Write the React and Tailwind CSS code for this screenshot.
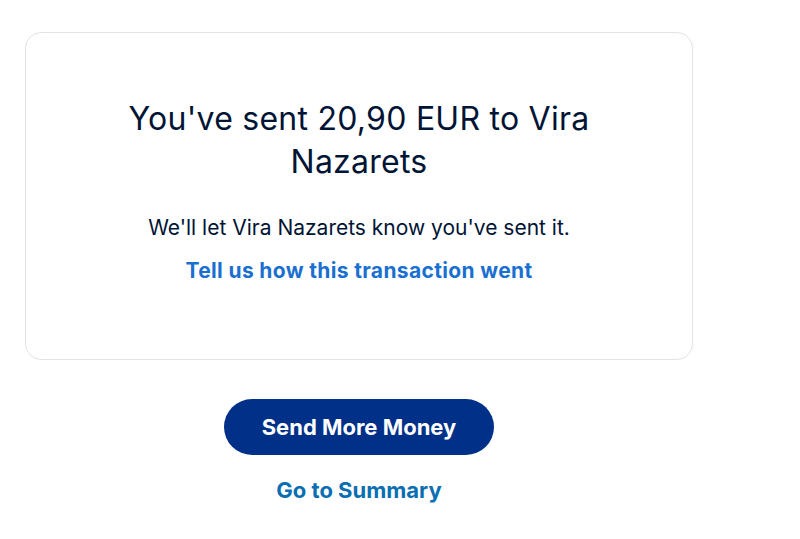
export default function App() {
  return (
    <div className="min-h-[539px] bg-white" style={{ fontFamily: 'Inter, "Liberation Sans", sans-serif' }}>
      <div className="ml-[25px] w-[668px] pt-[32px] flex flex-col items-center">
        <div className="w-full rounded-[16px] border border-[#e3e3e3] pt-[64px] pb-[75px] flex flex-col items-center">
          <h1 className="w-[490px] text-center text-[32px] leading-[43px] tracking-[0.25px] text-[#001435] font-normal">
            You've sent 20,90 EUR to Vira Nazarets
          </h1>
          <p className="mt-[32px] text-[21px] leading-[26px] text-[#001435]">
            We'll let Vira Nazarets know you've sent it.
          </p>
          <a className="mt-[17px] text-[21px] leading-[26px] font-bold tracking-[0.35px] text-[#1a6fd1] cursor-pointer">
            Tell us how this transaction went
          </a>
        </div>
        <button className="mt-[39px] w-[270px] h-[56px] rounded-full bg-[#003087] text-white text-[22px] font-bold">
          Send More Money
        </button>
        <a className="mt-[21px] text-[22px] leading-[28px] font-bold text-[#0a6eb3] cursor-pointer">
          Go to Summary
        </a>
      </div>
    </div>
  );
}
